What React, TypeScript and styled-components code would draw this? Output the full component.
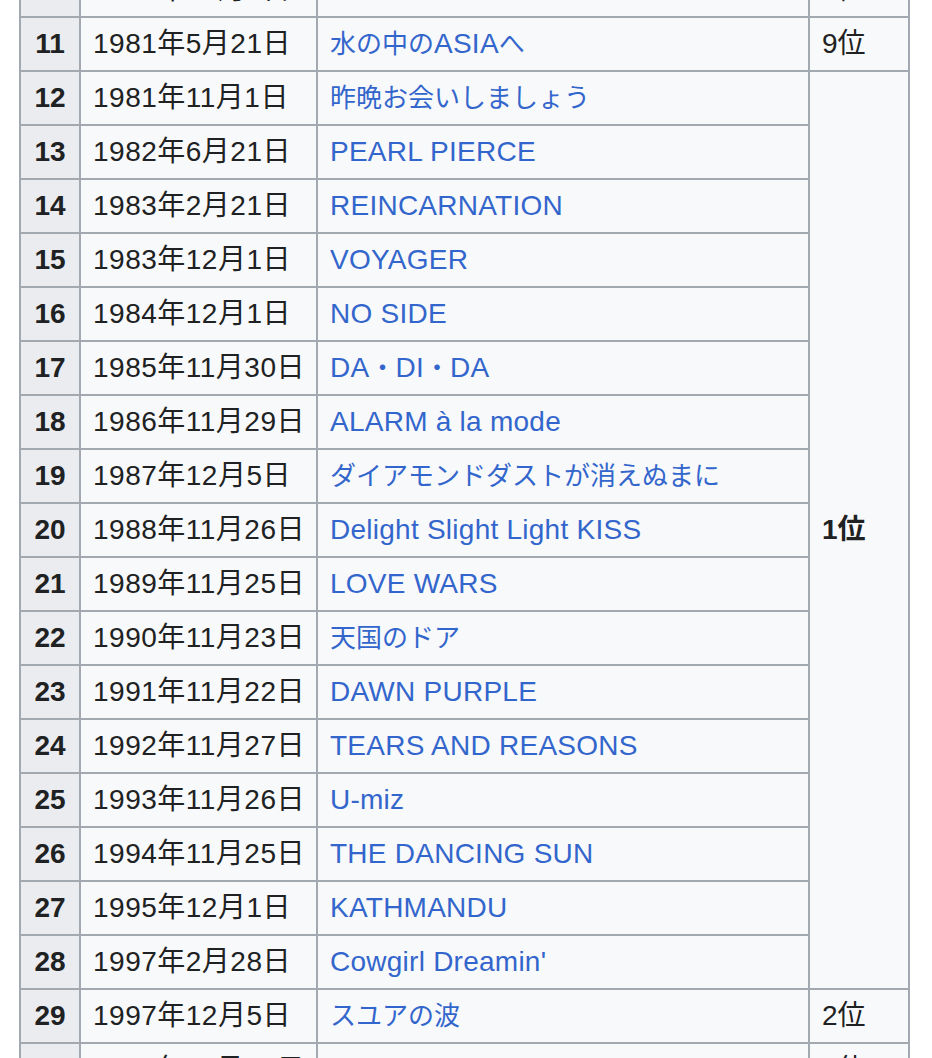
import React from "react";
import styled, { createGlobalStyle } from "styled-components";

const GlobalStyle = createGlobalStyle`
  html, body {
    margin: 0;
    padding: 0;
    background: #fff;
  }
  body {
    font-family: "Liberation Sans", "Noto Sans CJK JP", sans-serif;
    color: #202122;
  }
`;

const Table = styled.table`
  margin: -38px 0 0 19px;
  width: 889px;
  border-collapse: collapse;
  table-layout: fixed;
  font-size: 28px;
  line-height: 32px;
  background: #f8f9fa;
`;

const Col = styled.col<{ $w: number }>`
  width: ${(p) => p.$w}px;
`;

const NumCell = styled.th`
  height: 52px;
  padding: 0;
  border: 2px solid #a2a9b1;
  background: #eaecf0;
  text-align: center;
  font-weight: bold;
  vertical-align: middle;
`;

const Cell = styled.td<{ $bold?: boolean; $spacing?: number }>`
  height: 52px;
  padding: 0 10px 0 12px;
  border: 2px solid #a2a9b1;
  vertical-align: middle;
  white-space: nowrap;
  letter-spacing: ${(p) => p.$spacing ?? 0}px;
  font-weight: ${(p) => (p.$bold ? "bold" : "normal")};
`;

const Link = styled.a`
  color: #3366cc;
  text-decoration: none;
`;

// kana / kanji in titles run a little smaller than the latin letters
const Ja = styled.span`
  font-size: 26px;
  letter-spacing: 0;
`;

const cjk = /([\u3000-\u30ff\u4e00-\u9fff]+)/;

function Title({ text }: { text: string }) {
  return (
    <>
      {text.split(cjk).map((part, i) =>
        i % 2 === 1 ? <Ja key={i}>{part}</Ja> : part
      )}
    </>
  );
}

type Row = { no: number; date: string; title: string; rank?: string; span?: number };

const rows: Row[] = [
  { no: 10, date: "1980年12月1日", title: "SURF&SNOW", rank: "3位" },
  { no: 11, date: "1981年5月21日", title: "水の中のASIAへ", rank: "9位" },
  { no: 12, date: "1981年11月1日", title: "昨晩お会いしましょう", rank: "1位", span: 17 },
  { no: 13, date: "1982年6月21日", title: "PEARL PIERCE" },
  { no: 14, date: "1983年2月21日", title: "REINCARNATION" },
  { no: 15, date: "1983年12月1日", title: "VOYAGER" },
  { no: 16, date: "1984年12月1日", title: "NO SIDE" },
  { no: 17, date: "1985年11月30日", title: "DA・DI・DA" },
  { no: 18, date: "1986年11月29日", title: "ALARM à la mode" },
  { no: 19, date: "1987年12月5日", title: "ダイアモンドダストが消えぬまに" },
  { no: 20, date: "1988年11月26日", title: "Delight Slight Light KISS" },
  { no: 21, date: "1989年11月25日", title: "LOVE WARS" },
  { no: 22, date: "1990年11月23日", title: "天国のドア" },
  { no: 23, date: "1991年11月22日", title: "DAWN PURPLE" },
  { no: 24, date: "1992年11月27日", title: "TEARS AND REASONS" },
  { no: 25, date: "1993年11月26日", title: "U-miz" },
  { no: 26, date: "1994年11月25日", title: "THE DANCING SUN" },
  { no: 27, date: "1995年12月1日", title: "KATHMANDU" },
  { no: 28, date: "1997年2月28日", title: "Cowgirl Dreamin'" },
  { no: 29, date: "1997年12月5日", title: "スユアの波", rank: "2位" },
  { no: 30, date: "1999年11月17日", title: "FROZEN ROSES", rank: "2位" },
];

export default function App() {
  return (
    <>
      <GlobalStyle />
      <Table>
        <colgroup>
          <Col $w={60} />
          <Col $w={237} />
          <Col $w={492} />
          <Col $w={100} />
        </colgroup>
        <tbody>
          {rows.map((r) => (
            <tr key={r.no}>
              <NumCell>{r.no}</NumCell>
              <Cell $spacing={0.5}>{r.date}</Cell>
              <Cell $spacing={0.25}>
                <Link href="#">
                  <Title text={r.title} />
                </Link>
              </Cell>
              {r.rank && (
                <Cell rowSpan={r.span} $bold={!!r.span}>
                  {r.rank}
                </Cell>
              )}
            </tr>
          ))}
        </tbody>
      </Table>
    </>
  );
}
